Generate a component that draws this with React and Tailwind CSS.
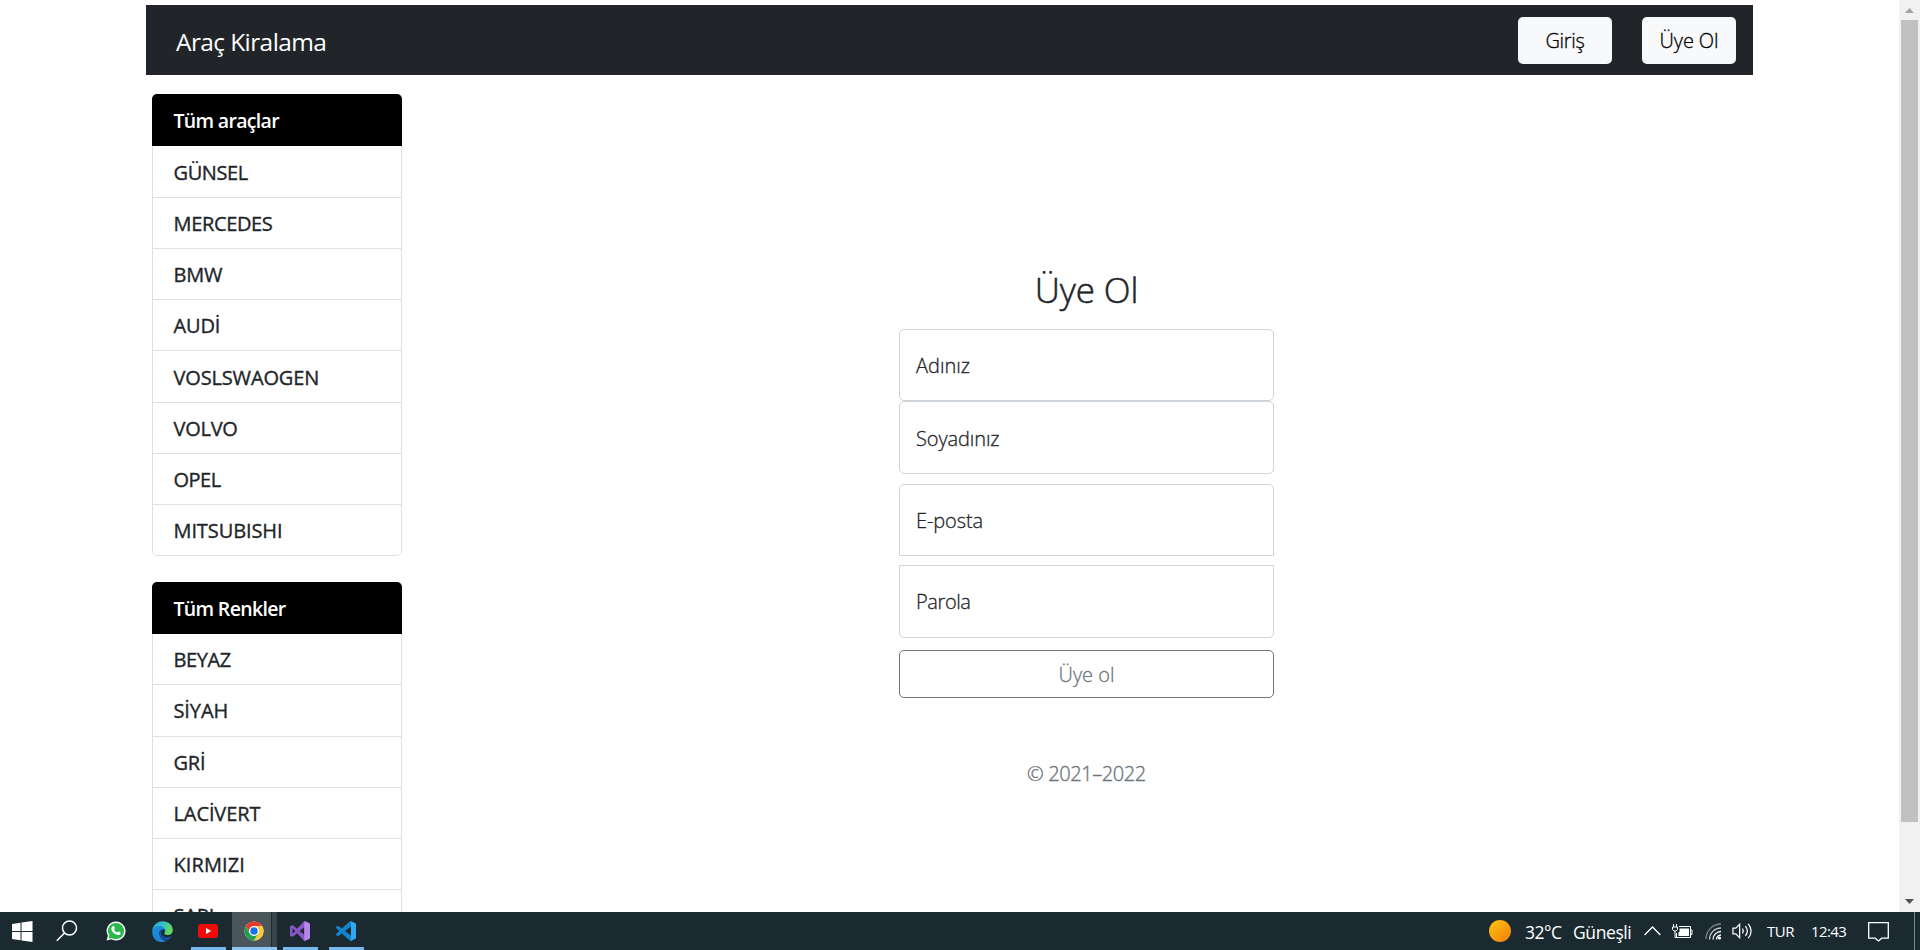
import React from "react";

const brands = [
  ["GÜNSEL", "tracking-[-0.4px]"],
  ["MERCEDES", "tracking-[-0.35px]"],
  ["BMW", "tracking-[-0.2px]"],
  ["AUDİ", "tracking-[-0.15px]"],
  ["VOSLSWAOGEN", "tracking-[-0.15px]"],
  ["VOLVO", "tracking-[-0.25px]"],
  ["OPEL", "tracking-[-0.5px]"],
  ["MITSUBISHI", "tracking-[-0.1px]"],
];

const colors = [
  ["BEYAZ", "tracking-[-0.4px]"],
  ["SİYAH", "tracking-[-0.1px]"],
  ["GRİ", "tracking-[-0.2px]"],
  ["LACİVERT", "tracking-[-0.1px]"],
  ["KIRMIZI", "tracking-[0.1px]"],
  ["SARI", "tracking-[-0.2px]"],
];

function FilterList({ title, items }) {
  return (
    <ul className="w-[250px] overflow-hidden rounded-[5px]">
      <li className="flex h-[52.4px] items-center bg-black pt-px pl-[21.5px] text-[19.5px] font-semibold tracking-[-0.68px] text-white">
        {title}
      </li>
      {items.map(([label, tracking]) => (
        <li
          key={label}
          className={`flex h-[51.25px] items-center border-x border-b border-[#dfdfdf] pt-[2px] pl-[20.5px] text-[20px] text-[#212529] [-webkit-text-stroke:0.35px_#212529] last:rounded-b-[5px] ${tracking}`}
        >
          {label}
        </li>
      ))}
    </ul>
  );
}

function Field({ label, className }) {
  return (
    <label className={`flex items-center border border-[#ced4da] pl-4 text-[20px] text-[#212529] [-webkit-text-stroke:0.3px_#212529] ${className}`}>
      {label}
    </label>
  );
}

function WindowsIcon() {
  return (
    <svg className="h-[21px] w-[21px]" viewBox="0 0 21 21" fill="#fff">
      <path d="M0 3 8.5 1.8V10H0zM9.5 1.6 20.500 0v10H9.5zM0 11h8.500v8.200L0 18zM9.500 11H20.500v10L9.500 19.400z" />
    </svg>
  );
}

function SearchIcon() {
  return (
    <svg className="h-[22px] w-[22px]" viewBox="0 0 22 22" fill="none" stroke="#fff" strokeWidth="1.5">
      <circle cx="13.500" cy="8" r="7" />
      <path d="M8.500 13 .8 20.800" />
    </svg>
  );
}

function WhatsAppIcon() {
  return (
    <svg className="h-[20px] w-[20px]" viewBox="0 0 20 20">
      <path d="M10 .5a9.500 9.500 0 1 1-4.600 17.800L.5 19.600l1.400-4.800A9.500 9.500 0 0 1 10 .5z" fill="#fff" />
      <path d="M10 1.900a8.100 8.100 0 1 1-4.300 15l-3.200.8.900-3.100A8.100 8.100 0 0 1 10 1.900z" fill="#29b94b" />
      <path d="M6.900 5.200c.5-.3 1-.2 1.200.3l.7 1.600c.2.500-.7 1.200-.7 1.500.6 1.300 1.700 2.300 3.100 2.900.4 0 1-1.200 1.500-1l1.800.9c.4.300.1 1.500-.5 2-.9.700-2.200.8-3.700.2-2.300-.9-4.100-2.700-4.900-4.900-.4-1.500.4-3 1.500-3.500z" fill="#fff" />
    </svg>
  );
}

function EdgeIcon() {
  return (
    <svg className="h-[21px] w-[21px]" viewBox="0 0 21 21">
      <defs>
        <linearGradient id="edgeTop" x1="0" y1="0" x2="1" y2="0.4">
          <stop offset="0" stopColor="#2aa7e0" />
          <stop offset="0.55" stopColor="#33c2c4" />
          <stop offset="1" stopColor="#63d957" />
        </linearGradient>
        <linearGradient id="edgeLow" x1="0" y1="0" x2="0.7" y2="1">
          <stop offset="0" stopColor="#1b8fdc" />
          <stop offset="1" stopColor="#1b7fd4" />
        </linearGradient>
      </defs>
      <path d="M.3 10C1 4.200 5.300.3 10.600.3c5.800 0 10.200 4 10.200 8.600 0 3.200-2.300 5.200-5.300 5.200-2.300 0-3.400-.8-3.400-1.500 0-.6 1-1 1-2.600 0-2.200-2.200-4.100-5.300-4.100-3.500 0-6.200 1.700-7.500 4.100z" fill="url(#edgeTop)" />
      <path d="M.3 10.300c.7-3.200 3.500-5.200 7-5.200 3 0 5.700 1.800 5.900 4.500-.9-1-2-1.400-3-1.200-2.200.5-3.200 2.700-2.600 5.100.6 3.300 3.300 6.300 6.600 6.400-5.400 3.400-14.600-.3-13.900-9.600z" fill="url(#edgeLow)" />
      <path d="M8 9.800c-.9 1.200-.9 2.900-.4 4.300 1.100 3.100 4.300 5.700 7.300 5.500 1.800-.6 3.600-2 4.600-3.800.3-.5-.1-.7-.5-.5-4.300 2-9.100.4-9.700-3.100-.2-1.500.5-2.600 1.500-3.200-1-.4-2.100 0-2.800.8z" fill="#134f9e" />
    </svg>
  );
}

function YoutubeIcon() {
  return (
    <svg className="h-[14px] w-[20px]" viewBox="0 0 20 14">
      <rect width="20" height="14" rx="3" fill="#f00a0a" />
      <path d="m8 4 5.200 3L8 10z" fill="#fff" />
    </svg>
  );
}

function ChromeIcon() {
  return (
    <svg className="h-[20px] w-[20px]" viewBox="0 0 48 48">
      <circle cx="24" cy="24" r="23" fill="#fff" />
      <path d="M4.080 12.500A23 23 0 0 1 43.920 12.500H24A11.500 11.500 0 0 0 14.040 29.750z" fill="#e33b2e" />
      <path d="M43.920 12.500A23 23 0 0 1 24 47L33.960 29.750A11.500 11.500 0 0 0 24 12.500z" fill="#fcc934" />
      <path d="M24 47A23 23 0 0 1 4.080 12.500L14.040 29.750A11.500 11.500 0 0 0 33.960 29.750z" fill="#22a04c" />
      <circle cx="24" cy="24" r="11.500" fill="#fff" />
      <circle cx="24" cy="24" r="9" fill="#1a73e8" />
    </svg>
  );
}

function VisualStudioIcon() {
  return (
    <svg className="h-[20px] w-[20px]" viewBox="0 0 24 24">
      <path
        fillRule="evenodd"
        fill="#8a55c6"
        d="M17.600 0 16.500.5 8.528 9.316 3.875 5.500 2.900 5 .6 5.900 0 6.700V17.300l.6.8 2.300.9.975-.5 4.653-3.816L16.500 23.500l1.100.5L18 17.100 11.500 12 18 6.900zM3 8.600 6.200 12 3 15.400z"
      />
      <path d="M17.600 0 23.100 2.400 24 3.700v16.600l-.9 1.300-5.500 2.400L17 23V1z" fill="#b884ee" />
    </svg>
  );
}

function VSCodeIcon() {
  return (
    <svg className="h-[20px] w-[20px]" viewBox="0 0 24 24">
      <path
        fill="#1583cc"
        d="M23.150 2.587L18.210.21a1.494 1.494 0 0 0-1.705.29l-9.460 8.630-4.120-3.128a.999.999 0 0 0-1.276.057L.327 7.261A1 1 0 0 0 .326 8.740L3.899 12 .326 15.260a1 1 0 0 0 .001 1.479L1.650 17.940a.999.999 0 0 0 1.276.057l4.120-3.128 9.460 8.630a1.492 1.492 0 0 0 1.704.29l4.942-2.377A1.500 1.500 0 0 0 24 20.060V3.939a1.500 1.500 0 0 0-.85-1.352zm-5.146 14.861L10.826 12l7.178-5.448v10.896z"
      />
      <path d="M18 .2 23.150 2.587 24 3.900v16.200l-.85 1.300L18 23.800z" fill="#2ea8ee" />
    </svg>
  );
}

function TaskButton({ children, className, line }) {
  return (
    <div className={`flex flex-col items-center ${className}`}>
      <div className="flex w-full flex-1 items-center justify-center pt-[3px] pr-px">{children}</div>
      <div className={`h-[3px] w-full ${line ? "bg-[#76b9ed]" : ""}`} />
    </div>
  );
}

function Taskbar() {
  return (
    <footer className="flex h-[38px] w-full shrink-0 bg-[#1b2a30] text-white">
      <TaskButton className="w-[45px]"><WindowsIcon /></TaskButton>
      <TaskButton className="w-[45px]"><SearchIcon /></TaskButton>
      <TaskButton className="ml-[3px] w-[47px]"><WhatsAppIcon /></TaskButton>
      <TaskButton className="w-[45px]"><EdgeIcon /></TaskButton>
      <TaskButton className="ml-[6px] w-[35px]" line><YoutubeIcon /></TaskButton>
      <div className="ml-[6px] flex w-[45px] border-b-[3px] border-[#8cc8f5] bg-[#374348]">
        <div className="flex w-[40px] items-center justify-center border-r border-[#1b2a30] bg-[#4b565a] pt-[3px] pl-[5px]">
          <ChromeIcon />
        </div>
      </div>
      <TaskButton className="ml-[6px] w-[35px]" line><VisualStudioIcon /></TaskButton>
      <TaskButton className="ml-[11px] w-[35px]" line><VSCodeIcon /></TaskButton>

      <div className="ml-auto flex items-center">
        <div className="h-[22px] w-[22px] rounded-full bg-linear-to-br from-[#fdc70c] to-[#f07b0c]" />
        <span className="ml-[14px] w-[48px] pt-[3px] text-[17.5px] tracking-[-0.5px] whitespace-nowrap">32°C</span>
        <span className="w-[71px] pt-[3px] text-[17.5px] tracking-[-0.4px] whitespace-nowrap">Güneşli</span>
        <svg className="h-[10px] w-[17px]" viewBox="0 0 17 10" fill="none" stroke="#fff" strokeWidth="1.300">
          <path d="m.6 9 7.900-8 7.900 8" />
        </svg>
        <svg className="ml-[11px] h-[15px] w-[21px]" viewBox="0 0 21 15" fill="none" stroke="#fff">
          <path d="M7 2.500h11.500v11h-14V9" />
          <path d="M18.500 6h1.500v4.500h-1.500" />
          <path d="M7.500 4.500H17V12H6.500V8h1z" fill="#fff" stroke="none" />
          <path d="M1.500 0v3M4.500 0v3M.5 3h5v2.500l-1.500 1.500H2L.5 5.500zM3 7v6.500h2" />
        </svg>
        <svg className="ml-[12px] h-[17px] w-[17px]" viewBox="0 0 17 17" fill="none" strokeWidth="1.300">
          <path d="M1 16A15 15 0 0 1 16 1" stroke="#7d878b" />
          <path d="M4.500 16.500A11.500 11.500 0 0 1 16 5" stroke="#c3c9cb" />
          <path d="M8 16.500A8 8 0 0 1 16 8.500" stroke="#fff" />
          <path d="M11.500 16.500A4.500 4.500 0 0 1 16 12" stroke="#fff" />
          <circle cx="14.500" cy="15" r="1.600" fill="#fff" />
        </svg>
        <svg className="ml-[10px] h-[18px] w-[21px]" viewBox="0 0 22 18" fill="none" stroke="#fff" strokeWidth="1.300">
          <path d="M1 6h3l4-4v14l-4-4H1z" />
          <path d="M11 6.500c1 1.500 1 3.500 0 5M14 4c2.500 3 2.500 7 0 10M17 1.500c4 4.500 4 10.500 0 15" />
        </svg>
        <span className="ml-[14px] w-[44px] pt-px text-[15px] tracking-[-0.5px]">TUR</span>
        <span className="w-[57px] pt-px text-[15px] tracking-[-0.6px]">12:43</span>
        <svg className="h-[21px] w-[21px]" viewBox="0 0 21 21" fill="none" stroke="#fff" strokeWidth="1.300">
          <path d="M.7 1.700h19.600v15.500h-6.500L10.500 20l-3.300-2.800H.7z" />
        </svg>
        <div className="ml-[25px] h-[38px] w-px bg-[#79848a]" />
        <div className="w-[5px]" />
      </div>
    </footer>
  );
}

function Scrollbar() {
  return (
    <div className="flex w-[21px] shrink-0 flex-col items-center bg-[#f1f1f1]">
      <div className="flex h-[20px] items-center">
        <svg className="h-[5px] w-[9px]" viewBox="0 0 9 5"><path d="M4.500 0 9 5H0z" fill="#a3a3a3" /></svg>
      </div>
      <div className="h-[802px] w-[17px] bg-[#c1c1c1]" />
      <div className="mt-auto flex h-[21px] items-center">
        <svg className="h-[5px] w-[9px]" viewBox="0 0 9 5"><path d="M0 0h9L4.500 5z" fill="#505050" /></svg>
      </div>
    </div>
  );
}

export default function App() {
  return (
    <div className="flex h-[950px] w-[1920px] flex-col overflow-hidden bg-white font-['Open_Sans','Noto_Sans',sans-serif]">
      <div className="flex h-[912px]">
        <div className="flex h-full flex-1 flex-col overflow-hidden pl-[146px]">
          <nav className="mt-[5px] flex h-[70px] w-[1607px] shrink-0 items-center bg-[#212529] pr-[17px] pl-[30px]">
            <span className="pt-[4px] text-[24.5px] tracking-[-0.6px] whitespace-nowrap text-white">Araç Kiralama</span>
            <button className="ml-auto h-[47px] w-[94px] rounded-[5px] bg-[#f8f9fa] pt-px text-[20px] font-light tracking-[-0.3px] text-black [-webkit-text-stroke:0.3px_#000]">Giriş</button>
            <button className="ml-[30px] h-[47px] w-[94px] rounded-[5px] bg-[#f8f9fa] pt-px text-[20px] font-light tracking-[-0.1px] text-black [-webkit-text-stroke:0.3px_#000]">Üye Ol</button>
          </nav>
          <div className="flex">
            <aside className="mt-[19px] ml-[6px] flex flex-col gap-[25.3px]">
              <FilterList title="Tüm araçlar" items={brands} />
              <FilterList title="Tüm Renkler" items={colors} />
            </aside>
            <main className="mt-[187px] ml-[497px] flex w-[375px] flex-col">
              <h1 className="flex h-[56px] items-center justify-center text-[35px] font-light tracking-[-0.1px] text-[#212529] [-webkit-text-stroke:0.5px_#212529]">Üye Ol</h1>
              <form className="mt-[11px] flex flex-col font-light">
                <Field label="Adınız" className="h-[72px] rounded-[5px] pt-px" />
                <Field label="Soyadınız" className="h-[73px] rounded-[5px] pt-[2px] tracking-[-0.1px]" />
                <Field label="E-posta" className="mt-[10px] h-[72px] rounded-t-[5px] pt-px tracking-[-0.1px]" />
                <Field label="Parola" className="mt-[9px] h-[73px] rounded-b-[5px] pt-px tracking-[-0.4px]" />
                <button className="mt-[12px] h-[48px] rounded-[5px] border border-[#6c757d] pt-px text-[20px] text-[#6c757d] [-webkit-text-stroke:0.3px_#6c757d]">Üye ol</button>
              </form>
              <p className="mt-[61px] text-center text-[20px] leading-[30px] font-light tracking-[-0.4px] text-[#6c757d] [-webkit-text-stroke:0.35px_#6c757d]">© 2021–2022</p>
            </main>
          </div>
        </div>
        <Scrollbar />
      </div>
      <Taskbar />
    </div>
  );
}
